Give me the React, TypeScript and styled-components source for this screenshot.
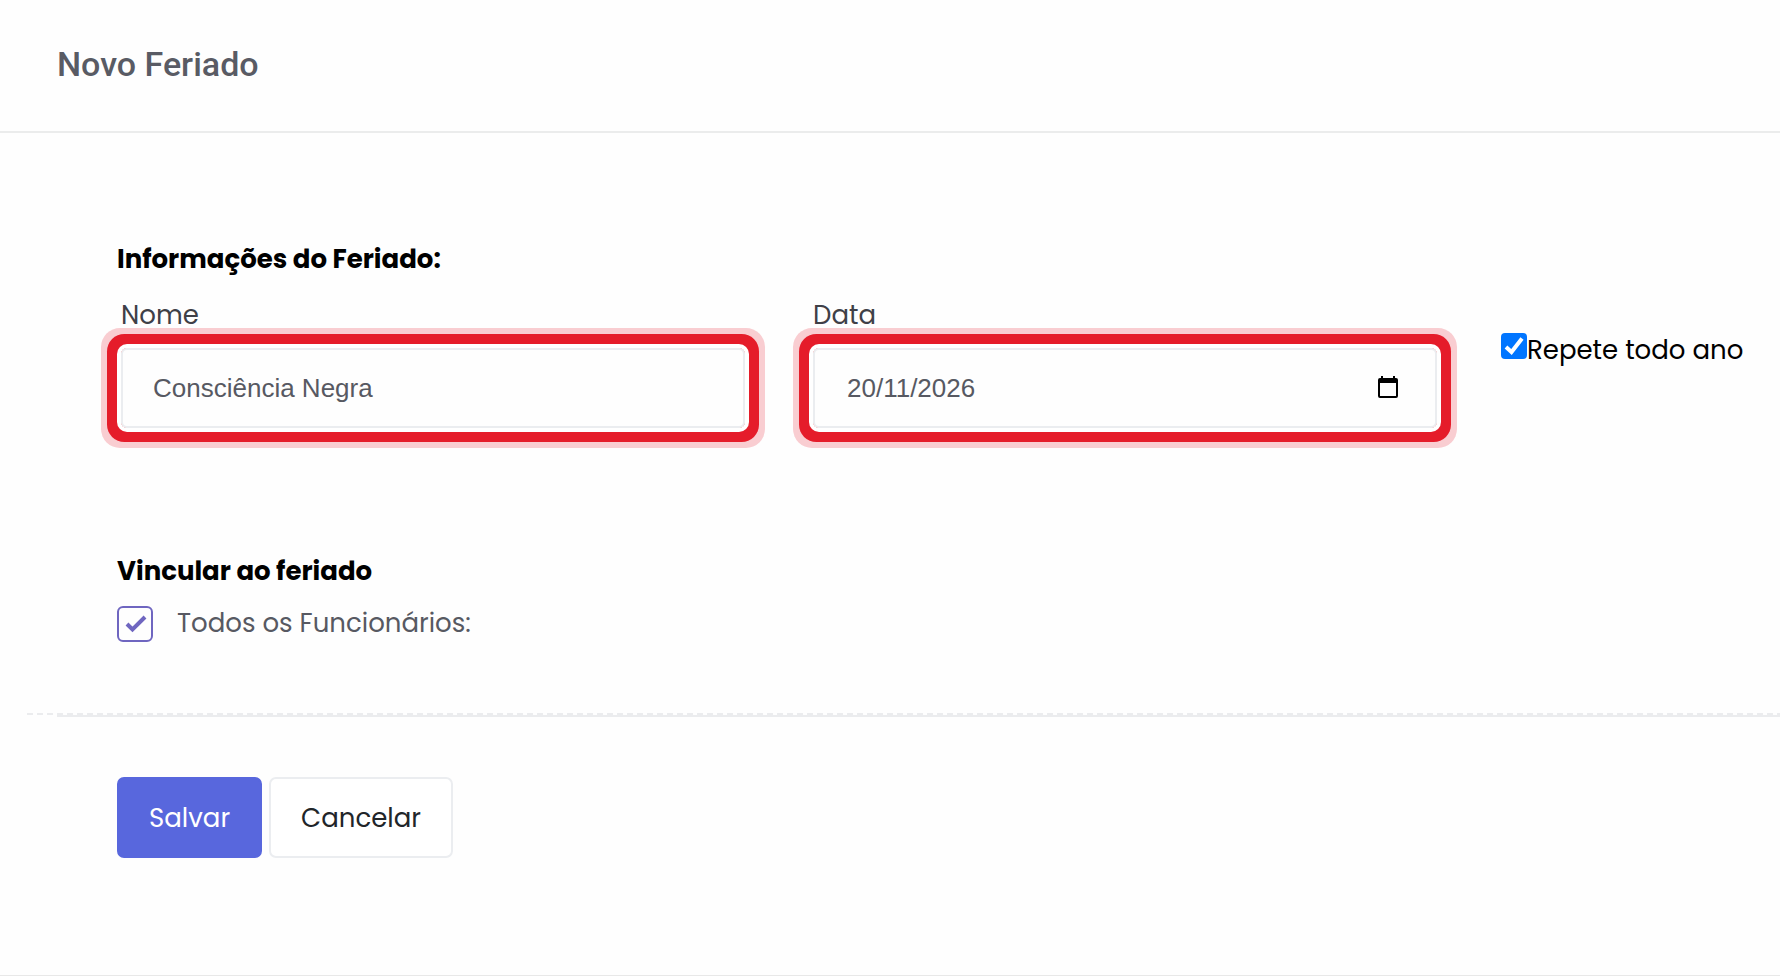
import React, { useState } from "react";
import styled, { createGlobalStyle, css } from "styled-components";

const GlobalStyle = createGlobalStyle`
  *, *::before, *::after { box-sizing: border-box; }
  body {
    margin: 0;
    background: #fefefe;
    color: #000;
    font-family: Poppins, Inter, sans-serif;
    font-size: 26px;
    line-height: 40px;
  }
`;

const Page = styled.main`
  border-bottom: 1px solid #e8e8e8;
`;

const Header = styled.header`
  display: flex;
  align-items: center;
  height: 133px;
  padding: 0 57px 4px;
  border-bottom: 2px solid #ebecec;
`;

const Title = styled.h1`
  margin: 0;
  color: #595b64;
  font-family: Roboto, sans-serif;
  font-size: 34px;
  font-weight: 500;
`;

const Section = styled.section`
  padding-top: 106px;
`;

const SectionTitle = styled.h2`
  margin: 0 0 0 117px;
  font-size: 26px;
  line-height: 40px;
  font-weight: 700;
`;

const FieldRow = styled.div`
  display: flex;
  align-items: flex-start;
  padding: 16px 0 0 87px;
`;

const Field = styled.div`
  flex: 1 1 0;
  min-width: 0;
  padding: 0 34px;
`;

const Label = styled.label`
  display: block;
  height: 53px;
  color: #3f4047;
`;

const InputFrame = styled.div`
  display: flex;
  align-items: center;
  height: 80px;
  padding: 0 30px;
  border: 2px solid #ebedf0;
  border-radius: 6px;
  box-shadow: 0 0 0 4px #fff, 0 0 0 14px #e51c2a, 0 0 0 20px #f9cdd1;
`;

const TextInput = styled.input`
  flex: 1;
  min-width: 0;
  height: 76px;
  padding: 0;
  border: 0;
  outline: 0;
  background: transparent;
  color: #575962;
  font: 26px "Liberation Sans", Arial, sans-serif;
`;

const DateInput = styled(TextInput)`
  padding: 0 2px;
`;

const CalendarButton = styled.button`
  display: flex;
  padding: 0 7px 2px;
  border: 0;
  background: none;
`;

const RepeatOption = styled.label`
  display: flex;
  flex: 0 0 309px;
  align-items: flex-start;
  padding: 35px 0 0 30px;
  white-space: nowrap;
`;

const box = css`
  display: block;
  margin: 0;
  appearance: none;
`;

const CheckWrap = styled.span`
  display: grid;
  flex: none;
  margin-top: 3px;
  > * { grid-area: 1 / 1; }
  svg { pointer-events: none; visibility: hidden; }
  input:checked + svg { visibility: visible; }
`;

const SolidCheckbox = styled.input`
  ${box}
  width: 26px;
  height: 26px;
  border-radius: 4px;
  border: 2px solid #767676;
  &:checked { border: 0; background: #0075ff; }
`;

const OutlineCheckbox = styled.input`
  ${box}
  width: 36px;
  height: 36px;
  border: 2px solid #6f66c0;
  border-radius: 6px;
`;

const LinkSection = styled.section`
  padding: 123px 0 70px;
`;

const EmployeesOption = styled.label`
  display: flex;
  width: fit-content;
  align-items: flex-start;
  gap: 24px;
  margin: 12px 0 0 117px;
  color: #575962;
`;

const DashedRule = styled.div`
  height: 2px;
  margin-left: 27px;
  background: repeating-linear-gradient(90deg, #ebecee 0 6px, transparent 6px 10px);
`;

const Footer = styled.footer`
  display: flex;
  gap: 7px;
  margin-left: 57px;
  padding: 60px 60px 117px;
  border-top: 2px solid #ebecee;
`;

const Button = styled.button<{ $primary?: boolean }>`
  height: 81px;
  padding: 0 30px;
  border: 2px solid ${(p) => (p.$primary ? "#5867dd" : "#ebedf0")};
  border-radius: 7px;
  background: ${(p) => (p.$primary ? "#5867dd" : "#fff")};
  color: ${(p) => (p.$primary ? "#fff" : "#212529")};
  font: inherit;
`;

export default function App() {
  const [name, setName] = useState("Consciência Negra");
  const [date, setDate] = useState("20/11/2026");
  return (
    <>
      <GlobalStyle />
      <Page>
        <Header>
          <Title>Novo Feriado</Title>
        </Header>
        <form onSubmit={(e) => e.preventDefault()}>
          <Section>
            <SectionTitle>Informações do Feriado:</SectionTitle>
            <FieldRow>
              <Field>
                <Label htmlFor="nome">Nome</Label>
                <InputFrame>
                  <TextInput id="nome" value={name} onChange={(e) => setName(e.target.value)} />
                </InputFrame>
              </Field>
              <Field>
                <Label htmlFor="data">Data</Label>
                <InputFrame>
                  <DateInput
                    id="data"
                    inputMode="numeric"
                    value={date}
                    onChange={(e) => setDate(e.target.value)}
                  />
                  <CalendarButton type="button" aria-label="Abrir calendário">
                    <svg width="20" height="22" viewBox="0 0 20 22">
                      <path
                        fillRule="evenodd"
                        d="M3 0h2v2h10V0h2v2h1a2 2 0 0 1 2 2v16a2 2 0 0 1-2 2H2a2 2 0 0 1-2-2V4a2 2 0 0 1 2-2h1zM2 7v13h16V7z"
                      />
                    </svg>
                  </CalendarButton>
                </InputFrame>
              </Field>
              <RepeatOption>
                <CheckWrap>
                  <SolidCheckbox type="checkbox" defaultChecked />
                  <svg width="26" height="26" viewBox="0 0 26 26">
                    <path d="M5 14l5.500 5L21 5.500" fill="none" stroke="#fff" strokeWidth="4" />
                  </svg>
                </CheckWrap>
                Repete todo ano
              </RepeatOption>
            </FieldRow>
          </Section>
          <LinkSection>
            <SectionTitle>Vincular ao feriado</SectionTitle>
            <EmployeesOption>
              <CheckWrap>
                <OutlineCheckbox type="checkbox" defaultChecked />
                <svg width="36" height="36" viewBox="0 0 36 36">
                  <path d="M10 18l5.500 5.500L28 11" fill="none" stroke="#6f66c0" strokeWidth="4" />
                </svg>
              </CheckWrap>
              Todos os Funcionários:
            </EmployeesOption>
          </LinkSection>
          <DashedRule />
          <Footer>
            <Button type="submit" $primary>Salvar</Button>
            <Button type="button">Cancelar</Button>
          </Footer>
        </form>
      </Page>
    </>
  );
}
